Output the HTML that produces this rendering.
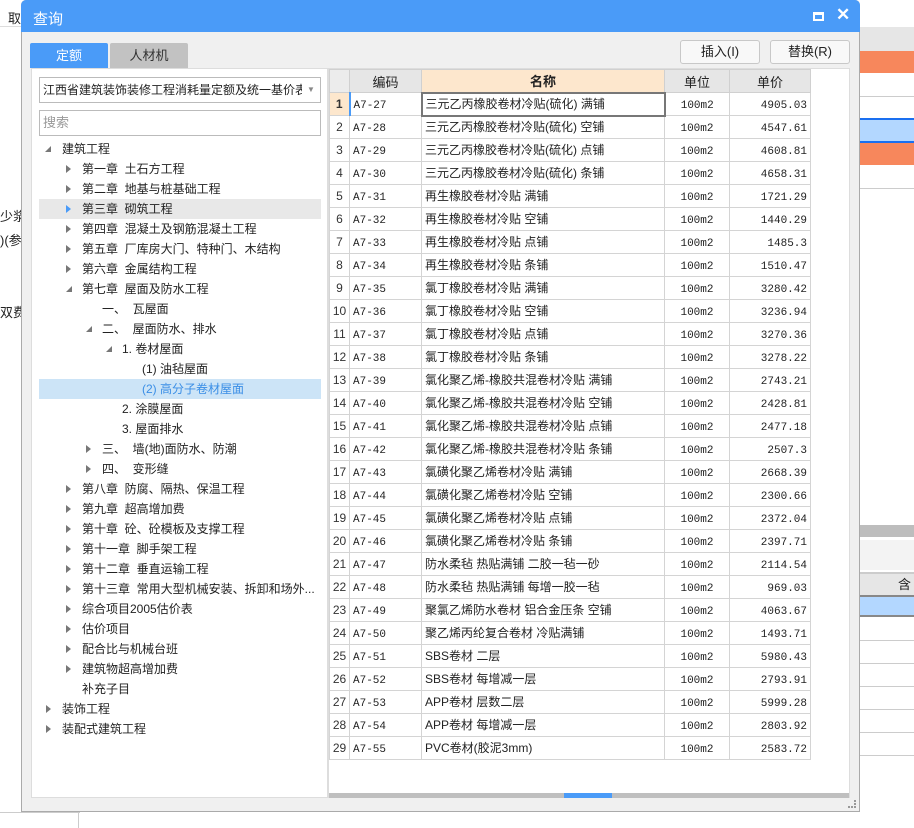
<!DOCTYPE html>
<html><head><meta charset="utf-8"><style>
*{margin:0;padding:0;box-sizing:border-box}
body{width:914px;height:828px;overflow:hidden;background:#fff;position:relative;font-family:"Liberation Sans","Noto Sans CJK SC",sans-serif;font-size:12px;color:#222}
.a{position:absolute}
.tree div{position:absolute;height:20px;line-height:20px;white-space:nowrap;font-size:12px}
.tri{position:absolute;width:0;height:0}
.r{border-left:5px solid #777;border-top:4px solid transparent;border-bottom:4px solid transparent;top:6px}
.d{border-right:6px solid #777;border-top:6px solid transparent;top:7px}
table{border-collapse:collapse;font-family:"Liberation Mono","Noto Sans CJK SC",monospace;font-size:11px}
td{border:1px solid #d4d4d4;height:23px;line-height:21px;vertical-align:middle;padding:0 3px;white-space:nowrap;overflow:hidden}
td:nth-child(2),td:nth-child(4),td:nth-child(5){line-height:17px;padding-top:4px}
td:nth-child(3){font-family:"Liberation Sans","Noto Sans CJK SC",sans-serif;font-size:12px}
td.n{text-align:center;background:#fff;color:#333;padding:0;font-family:"Liberation Sans",sans-serif;font-size:12px}
td.u{text-align:center}
td.p{text-align:right}
th{height:23px;background:#e6e6e6;border:1px solid #d0d0d0;font-weight:normal;font-family:"Liberation Sans","Noto Sans CJK SC",sans-serif;font-size:13px}
</style></head><body>
<div class="a" style="left:8px;top:8px;font-size:13px">取</div>
<div class="a" style="left:0;top:26px;width:21px;height:1px;background:#ddd"></div>
<div class="a" style="left:0;top:206px;font-size:13px">少浆</div>
<div class="a" style="left:0;top:230px;font-size:13px">)(参</div>
<div class="a" style="left:0;top:302px;font-size:13px">双费)</div>
<div class="a" style="left:0;top:812px;width:80px;height:16px;background:#fff;border-top:1px solid #ccc"></div>
<div class="a" style="left:78px;top:812px;width:1px;height:16px;background:#ccc"></div>
<div class="a" style="left:860px;top:27px;width:54px;height:24px;background:#e6e6e6"></div>
<div class="a" style="left:860px;top:51px;width:54px;height:22px;background:#f7875c"></div>
<div class="a" style="left:860px;top:96px;width:54px;height:1px;background:#ccc"></div>
<div class="a" style="left:860px;top:118px;width:54px;height:25px;background:#b3d7ff;border-top:2px solid #1a6ff0;border-bottom:2px solid #1a6ff0"></div>
<div class="a" style="left:860px;top:143px;width:54px;height:22px;background:#f7875c"></div>
<div class="a" style="left:860px;top:188px;width:54px;height:1px;background:#ccc"></div>
<div class="a" style="left:860px;top:525px;width:54px;height:12px;background:#bdbdbd"></div>
<div class="a" style="left:860px;top:540px;width:54px;height:30px;background:#f3f3f3"></div>
<div class="a" style="left:860px;top:572px;width:54px;height:23px;background:#e6e6e6;border-top:2px solid #ccc;font-size:13px;padding-left:38px;line-height:21px">含量</div>
<div class="a" style="left:860px;top:595px;width:54px;height:22px;background:#b3d7ff;border-top:2px solid #888;border-bottom:2px solid #888"></div>
<div class="a" style="left:860px;top:640px;width:54px;height:1px;background:#ccc"></div>
<div class="a" style="left:860px;top:663px;width:54px;height:1px;background:#ccc"></div>
<div class="a" style="left:860px;top:686px;width:54px;height:1px;background:#ccc"></div>
<div class="a" style="left:860px;top:709px;width:54px;height:1px;background:#ccc"></div>
<div class="a" style="left:860px;top:732px;width:54px;height:1px;background:#ccc"></div>
<div class="a" style="left:860px;top:755px;width:54px;height:1px;background:#ccc"></div>
<div class="a" style="left:21px;top:0;width:839px;height:812px;background:#f0f0f0;border:1px solid #aaa;border-radius:5px 5px 0 0"></div>
<div class="a" style="left:21px;top:0;width:839px;height:32px;background:#4a9bf8;border-radius:5px 5px 0 0"></div>
<div class="a" style="left:33px;top:8px;color:#fff;font-size:15px">查询</div>
<div class="a" style="left:813px;top:12px;width:11px;height:9px;border:2px solid #fff;border-top-width:3px"></div>
<div class="a" style="left:836px;top:5px;color:#fff;font-size:17px;font-weight:bold">✕</div>
<div class="a" style="left:30px;top:43px;width:78px;height:25px;background:#4a9bf8;color:#fff;text-align:center;line-height:25px;font-size:13px;border-radius:2px 2px 0 0">定额</div>
<div class="a" style="left:110px;top:43px;width:78px;height:25px;background:#c2c2c2;color:#333;text-align:center;line-height:25px;font-size:13px;border-radius:2px 2px 0 0">人材机</div>
<div class="a" style="left:680px;top:40px;width:80px;height:24px;background:#f8f8f8;border:1px solid #c8c8c8;border-radius:3px;text-align:center;line-height:22px;font-size:13px">插入(I)</div>
<div class="a" style="left:770px;top:40px;width:80px;height:24px;background:#f8f8f8;border:1px solid #c8c8c8;border-radius:3px;text-align:center;line-height:22px;font-size:13px">替换(R)</div>
<div class="a" style="left:31px;top:68px;width:297px;height:730px;background:#fff;border:1px solid #ddd"></div>
<div class="a" style="left:39px;top:77px;width:282px;height:26px;border:1px solid #bbb;background:#fff;line-height:24px;padding-left:3px;font-size:12px;overflow:hidden;white-space:nowrap">江西省建筑装饰装修工程消耗量定额及统一基价表</div>
<div class="a" style="left:302px;top:78px;width:18px;height:24px;background:#fff;color:#888;font-size:8px;line-height:24px;text-align:center">▼</div>
<div class="a" style="left:39px;top:110px;width:282px;height:26px;border:1px solid #bbb;background:#fff;line-height:24px;padding-left:3px;color:#999;font-size:13px">搜索</div>
<div class="a" style="left:39px;top:199px;width:282px;height:20px;background:#e8e8e8"></div>
<div class="a" style="left:39px;top:379px;width:282px;height:20px;background:#cce4f7"></div>
<div class="tree">
<div style="left:62px;top:139px">建筑工程</div><span class="tri d a" style="left:45px;top:146px"></span>
<div style="left:82px;top:159px">第一章&nbsp; 土石方工程</div><span class="tri r a" style="left:66px;top:165px"></span>
<div style="left:82px;top:179px">第二章&nbsp; 地基与桩基础工程</div><span class="tri r a" style="left:66px;top:185px"></span>
<div style="left:82px;top:199px">第三章&nbsp; 砌筑工程</div><span class="tri r a" style="left:66px;top:205px;border-left-color:#4a9bf8"></span>
<div style="left:82px;top:219px">第四章&nbsp; 混凝土及钢筋混凝土工程</div><span class="tri r a" style="left:66px;top:225px"></span>
<div style="left:82px;top:239px">第五章&nbsp; 厂库房大门、特种门、木结构</div><span class="tri r a" style="left:66px;top:245px"></span>
<div style="left:82px;top:259px">第六章&nbsp; 金属结构工程</div><span class="tri r a" style="left:66px;top:265px"></span>
<div style="left:82px;top:279px">第七章&nbsp; 屋面及防水工程</div><span class="tri d a" style="left:66px;top:286px"></span>
<div style="left:102px;top:299px">一、&nbsp; 瓦屋面</div>
<div style="left:102px;top:319px">二、&nbsp; 屋面防水、排水</div><span class="tri d a" style="left:86px;top:326px"></span>
<div style="left:122px;top:339px">1. 卷材屋面</div><span class="tri d a" style="left:106px;top:346px"></span>
<div style="left:142px;top:359px">(1) 油毡屋面</div>
<div style="left:142px;top:379px;color:#3a8ee6">(2) 高分子卷材屋面</div>
<div style="left:122px;top:399px">2. 涂膜屋面</div>
<div style="left:122px;top:419px">3. 屋面排水</div>
<div style="left:102px;top:439px">三、&nbsp; 墙(地)面防水、防潮</div><span class="tri r a" style="left:86px;top:445px"></span>
<div style="left:102px;top:459px">四、&nbsp; 变形缝</div><span class="tri r a" style="left:86px;top:465px"></span>
<div style="left:82px;top:479px">第八章&nbsp; 防腐、隔热、保温工程</div><span class="tri r a" style="left:66px;top:485px"></span>
<div style="left:82px;top:499px">第九章&nbsp; 超高增加费</div><span class="tri r a" style="left:66px;top:505px"></span>
<div style="left:82px;top:519px">第十章&nbsp; 砼、砼模板及支撑工程</div><span class="tri r a" style="left:66px;top:525px"></span>
<div style="left:82px;top:539px">第十一章&nbsp; 脚手架工程</div><span class="tri r a" style="left:66px;top:545px"></span>
<div style="left:82px;top:559px">第十二章&nbsp; 垂直运输工程</div><span class="tri r a" style="left:66px;top:565px"></span>
<div style="left:82px;top:579px">第十三章&nbsp; 常用大型机械安装、拆卸和场外...</div><span class="tri r a" style="left:66px;top:585px"></span>
<div style="left:82px;top:599px">综合项目2005估价表</div><span class="tri r a" style="left:66px;top:605px"></span>
<div style="left:82px;top:619px">估价项目</div><span class="tri r a" style="left:66px;top:625px"></span>
<div style="left:82px;top:639px">配合比与机械台班</div><span class="tri r a" style="left:66px;top:645px"></span>
<div style="left:82px;top:659px">建筑物超高增加费</div><span class="tri r a" style="left:66px;top:665px"></span>
<div style="left:82px;top:679px">补充子目</div>
<div style="left:62px;top:699px">装饰工程</div><span class="tri r a" style="left:46px;top:705px"></span>
<div style="left:62px;top:719px">装配式建筑工程</div><span class="tri r a" style="left:46px;top:725px"></span>
</div>
<div class="a" style="left:328px;top:68px;width:522px;height:730px;background:#fff;border:1px solid #ddd"></div>
<table class="a" style="left:329px;top:69px;width:481px;table-layout:fixed">
<colgroup><col style="width:20px"><col style="width:72px"><col style="width:243px"><col style="width:65px"><col style="width:81px"></colgroup>
<tr><th style="background:#ececec"></th><th>编码</th><th style="background:#fde7cd;font-weight:bold">名称</th><th>单位</th><th>单价</th></tr>
<tr><td class="n" style="background:#fde7cd;font-weight:bold;border-right:2px solid #4a9bf8">1</td><td>A7-27</td><td style="border:2px solid #777">三元乙丙橡胶卷材冷贴(硫化) 满铺</td><td class="u">100m2</td><td class="p">4905.03</td></tr>
<tr><td class="n">2</td><td>A7-28</td><td>三元乙丙橡胶卷材冷贴(硫化) 空铺</td><td class="u">100m2</td><td class="p">4547.61</td></tr>
<tr><td class="n">3</td><td>A7-29</td><td>三元乙丙橡胶卷材冷贴(硫化) 点铺</td><td class="u">100m2</td><td class="p">4608.81</td></tr>
<tr><td class="n">4</td><td>A7-30</td><td>三元乙丙橡胶卷材冷贴(硫化) 条铺</td><td class="u">100m2</td><td class="p">4658.31</td></tr>
<tr><td class="n">5</td><td>A7-31</td><td>再生橡胶卷材冷贴 满铺</td><td class="u">100m2</td><td class="p">1721.29</td></tr>
<tr><td class="n">6</td><td>A7-32</td><td>再生橡胶卷材冷贴 空铺</td><td class="u">100m2</td><td class="p">1440.29</td></tr>
<tr><td class="n">7</td><td>A7-33</td><td>再生橡胶卷材冷贴 点铺</td><td class="u">100m2</td><td class="p">1485.3</td></tr>
<tr><td class="n">8</td><td>A7-34</td><td>再生橡胶卷材冷贴 条铺</td><td class="u">100m2</td><td class="p">1510.47</td></tr>
<tr><td class="n">9</td><td>A7-35</td><td>氯丁橡胶卷材冷贴 满铺</td><td class="u">100m2</td><td class="p">3280.42</td></tr>
<tr><td class="n">10</td><td>A7-36</td><td>氯丁橡胶卷材冷贴 空铺</td><td class="u">100m2</td><td class="p">3236.94</td></tr>
<tr><td class="n">11</td><td>A7-37</td><td>氯丁橡胶卷材冷贴 点铺</td><td class="u">100m2</td><td class="p">3270.36</td></tr>
<tr><td class="n">12</td><td>A7-38</td><td>氯丁橡胶卷材冷贴 条铺</td><td class="u">100m2</td><td class="p">3278.22</td></tr>
<tr><td class="n">13</td><td>A7-39</td><td>氯化聚乙烯-橡胶共混卷材冷贴 满铺</td><td class="u">100m2</td><td class="p">2743.21</td></tr>
<tr><td class="n">14</td><td>A7-40</td><td>氯化聚乙烯-橡胶共混卷材冷贴 空铺</td><td class="u">100m2</td><td class="p">2428.81</td></tr>
<tr><td class="n">15</td><td>A7-41</td><td>氯化聚乙烯-橡胶共混卷材冷贴 点铺</td><td class="u">100m2</td><td class="p">2477.18</td></tr>
<tr><td class="n">16</td><td>A7-42</td><td>氯化聚乙烯-橡胶共混卷材冷贴 条铺</td><td class="u">100m2</td><td class="p">2507.3</td></tr>
<tr><td class="n">17</td><td>A7-43</td><td>氯磺化聚乙烯卷材冷贴 满铺</td><td class="u">100m2</td><td class="p">2668.39</td></tr>
<tr><td class="n">18</td><td>A7-44</td><td>氯磺化聚乙烯卷材冷贴 空铺</td><td class="u">100m2</td><td class="p">2300.66</td></tr>
<tr><td class="n">19</td><td>A7-45</td><td>氯磺化聚乙烯卷材冷贴 点铺</td><td class="u">100m2</td><td class="p">2372.04</td></tr>
<tr><td class="n">20</td><td>A7-46</td><td>氯磺化聚乙烯卷材冷贴 条铺</td><td class="u">100m2</td><td class="p">2397.71</td></tr>
<tr><td class="n">21</td><td>A7-47</td><td>防水柔毡 热贴满铺 二胶一毡一砂</td><td class="u">100m2</td><td class="p">2114.54</td></tr>
<tr><td class="n">22</td><td>A7-48</td><td>防水柔毡 热贴满铺 每增一胶一毡</td><td class="u">100m2</td><td class="p">969.03</td></tr>
<tr><td class="n">23</td><td>A7-49</td><td>聚氯乙烯防水卷材 铝合金压条 空铺</td><td class="u">100m2</td><td class="p">4063.67</td></tr>
<tr><td class="n">24</td><td>A7-50</td><td>聚乙烯丙纶复合卷材 冷贴满铺</td><td class="u">100m2</td><td class="p">1493.71</td></tr>
<tr><td class="n">25</td><td>A7-51</td><td>SBS卷材 二层</td><td class="u">100m2</td><td class="p">5980.43</td></tr>
<tr><td class="n">26</td><td>A7-52</td><td>SBS卷材 每增减一层</td><td class="u">100m2</td><td class="p">2793.91</td></tr>
<tr><td class="n">27</td><td>A7-53</td><td>APP卷材 层数二层</td><td class="u">100m2</td><td class="p">5999.28</td></tr>
<tr><td class="n">28</td><td>A7-54</td><td>APP卷材 每增减一层</td><td class="u">100m2</td><td class="p">2803.92</td></tr>
<tr><td class="n">29</td><td>A7-55</td><td>PVC卷材(胶泥3mm)</td><td class="u">100m2</td><td class="p">2583.72</td></tr>
</table>
<div class="a" style="left:329px;top:793px;width:520px;height:5px;background:#bfbfbf"></div>
<div class="a" style="left:564px;top:793px;width:48px;height:5px;background:#4a9bf8"></div>
<div class="a" style="left:848px;top:800px;width:8px;height:8px;border-right:2px dotted #999;border-bottom:2px dotted #999"></div>
</body></html>
